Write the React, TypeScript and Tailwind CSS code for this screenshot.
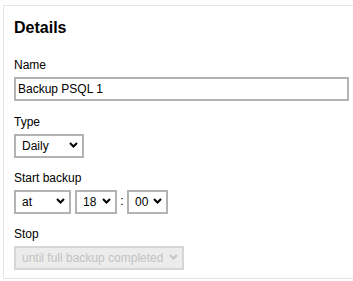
import React, { useState } from 'react';

function Chevron({ disabled }: { disabled?: boolean }) {
  return (
    <svg
      width="9"
      height="6"
      viewBox="0 0 9 6"
      className="pointer-events-none absolute right-[6px] top-1/2 -translate-y-1/2"
    >
      <path
        d="M1 1 L4.5 4.5 L8 1"
        fill="none"
        stroke={disabled ? '#c4c4c4' : '#000'}
        strokeWidth="2"
      />
    </svg>
  );
}

function Select({
  value,
  options,
  width,
  disabled,
  onChange,
}: {
  value: string;
  options: string[];
  width: string;
  disabled?: boolean;
  onChange?: (v: string) => void;
}) {
  return (
    <div className={`relative h-[24px] ${width}`}>
      <select
        value={value}
        disabled={disabled}
        onChange={(e) => onChange?.(e.target.value)}
        className={
          disabled
            ? 'h-full w-full appearance-none border-2 border-[#d6d6d6] bg-[#ececec] pl-[6px] text-[12px] text-[#c2c2c2] outline-none'
            : 'h-full w-full appearance-none border-2 border-[#b3b3b3] bg-white pl-[6px] text-[12px] text-black outline-none'
        }
      >
        {options.map((o) => (
          <option key={o}>{o}</option>
        ))}
      </select>
      <Chevron disabled={disabled} />
    </div>
  );
}

function Field({ label, children }: { label: string; children: React.ReactNode }) {
  return (
    <div>
      <div className="mb-[4px] text-[12px] leading-[14px] text-black">{label}</div>
      {children}
    </div>
  );
}

export default function App() {
  const [name, setName] = useState('Backup PSQL 1');
  const [type, setType] = useState('Daily');
  const [mode, setMode] = useState('at');
  const [hour, setHour] = useState('18');
  const [minute, setMinute] = useState('00');

  return (
    <div className="min-h-[281px] bg-white pl-[3px] pt-[5px] font-['Liberation_Sans',Arial,sans-serif]">
      <div className="border-y border-l border-[#e4e4e4] pb-[9px] pl-[10px] pr-[4px] pt-[12px]">
        <h2 className="mb-[20px] text-[16px] font-bold leading-[20px] text-black">Details</h2>

        <div className="flex flex-col gap-[14px]">
          <Field label="Name">
            <input
              value={name}
              onChange={(e) => setName(e.target.value)}
              className="h-[24px] w-full border-2 border-[#b3b3b3] bg-white px-[2px] text-[12px] text-black outline-none"
            />
          </Field>

          <Field label="Type">
            <Select value={type} options={['Daily', 'Weekly', 'Monthly']} width="w-[70px]" onChange={setType} />
          </Field>

          <Field label="Start backup">
            <div className="flex items-center">
              <Select value={mode} options={['at', 'every']} width="w-[57px]" onChange={setMode} />
              <div className="ml-[4px]">
                <Select
                  value={hour}
                  options={Array.from({ length: 24 }, (_, i) => String(i).padStart(2, '0'))}
                  width="w-[42px]"
                  onChange={setHour}
                />
              </div>
              <span className="w-[10px] text-center text-[12px] leading-[14px] text-black">:</span>
              <Select value={minute} options={['00', '15', '30', '45']} width="w-[41px]" onChange={setMinute} />
            </div>
          </Field>

          <Field label="Stop">
            <Select value="until full backup completed" options={['until full backup completed']} width="w-[170px]" disabled />
          </Field>
        </div>
      </div>
    </div>
  );
}
